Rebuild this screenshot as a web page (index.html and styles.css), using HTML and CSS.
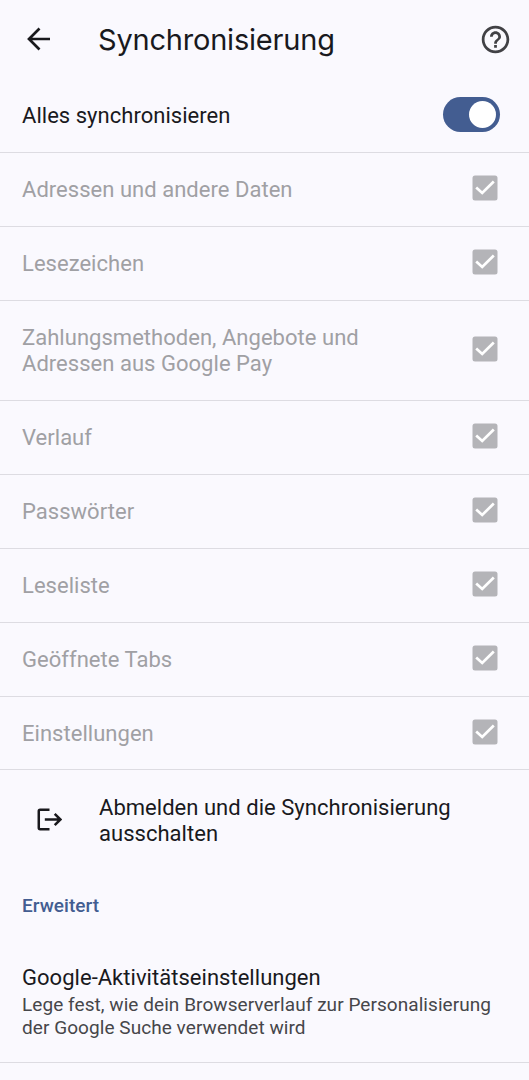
FILE: index.html
```html
<!DOCTYPE html>
<html lang="de">
<head>
<meta charset="utf-8">
<title>Synchronisierung</title>
<link rel="stylesheet" href="styles.css">
</head>
<body>
<svg class="sprite" aria-hidden="true">
  <symbol id="check" viewBox="0 0 26 26">
    <rect x=".5" y=".5" width="25" height="25" rx="2.5" fill="#b4b4b8"/>
    <path d="M4.200 12.500 10.200 18 21.800 6.500" fill="none" stroke="#fff" stroke-width="2.700"/>
  </symbol>
</svg>
<header class="topbar">
  <svg class="back" viewBox="0 0 24 24"><path d="M12.500 1.500 2 12 12.500 22.500M2.200 12H23" /></svg>
  <h1 class="title"><span>Synchronisierung</span></h1>
  <svg class="help" viewBox="0 0 24 24"><path d="M11 18h2v-2h-2v2zm1-16C6.48 2 2 6.48 2 12s4.48 10 10 10 10-4.48 10-10S17.520 2 12 2zm0 18c-4.410 0-8-3.590-8-8s3.590-8 8-8 8 3.590 8 8-3.590 8-8 8zm0-14c-2.210 0-4 1.790-4 4h2c0-1.100.9-2 2-2s2 .9 2 2c0 2-3 1.750-3 5h2c0-2.250 3-2.500 3-5 0-2.210-1.790-4-4-4z"/></svg>
</header>
<main>
  <div class="row all"><span>Alles synchronisieren</span><span class="switch"><span class="thumb"></span></span></div>
  <div class="row off"><span>Adressen und andere Daten</span><svg class="box"><use href="#check"/></svg></div>
  <div class="row off"><span>Lesezeichen</span><svg class="box"><use href="#check"/></svg></div>
  <div class="row off tall"><span>Zahlungsmethoden, Angebote und<br>Adressen aus Google Pay</span><svg class="box"><use href="#check"/></svg></div>
  <div class="row off"><span>Verlauf</span><svg class="box"><use href="#check"/></svg></div>
  <div class="row off"><span>Passwörter</span><svg class="box"><use href="#check"/></svg></div>
  <div class="row off"><span>Leseliste</span><svg class="box"><use href="#check"/></svg></div>
  <div class="row off"><span>Geöffnete Tabs</span><svg class="box"><use href="#check"/></svg></div>
  <div class="row off last"><span>Einstellungen</span><svg class="box"><use href="#check"/></svg></div>
  <div class="signout">
    <svg class="exit" viewBox="0 0 24 22"><path d="M12 1.700H3Q1.700 1.700 1.700 3V19Q1.700 20.300 3 20.300H12M7.500 11H22.500M17 5.500 22.500 11 17 16.500"/></svg>
    <span>Abmelden und die Synchronisierung<br>ausschalten</span>
  </div>
  <h2 class="section">Erweitert</h2>
  <div class="activity">
    <div>Google-Aktivitätseinstellungen</div>
    <p class="summary">Lege fest, wie dein Browserverlauf zur Personalisierung<br>der Google Suche verwendet wird</p>
  </div>
</main>
</body>
</html>
```
FILE: styles.css
```css
* { box-sizing: border-box; }
body {
  margin: 0;
  height: 1080px;
  overflow: hidden;
  background: #faf9fe;
  color: #19191d;
  font: 400 22px/26px Roboto, sans-serif;
  letter-spacing: .03px;
  white-space: nowrap;
}
.sprite { display: block; width: 0; height: 0; }
.topbar {
  display: flex;
  align-items: center;
  height: 79px;
  padding: 0 17px 1px 27px;
}
.back { width: 24px; height: 24px; fill: none; stroke: #19191d; stroke-width: 2.7; }
.title {
  flex: 1;
  margin: 1px 0 0 47px;
  font: 400 29px/40px Inter, sans-serif;
  letter-spacing: -.2px;
}
.help { width: 33px; height: 33px; fill: #414145; }
.row {
  display: flex;
  align-items: center;
  justify-content: space-between;
  height: 74px;
  padding: 0 31px 0 22px;
  border-bottom: 1px solid #dddce2;
}
.row.all { padding-right: 29px; }
.row.tall { height: 100px; }
.row.last { height: 73px; padding-top: 1px; }
.off { color: #a0a0a4; }
.box { width: 26px; height: 26px; margin-bottom: 3px; }
.switch {
  display: flex;
  justify-content: flex-end;
  align-items: center;
  width: 57px;
  height: 35px;
  margin-bottom: 2px;
  padding-right: 4px;
  border-radius: 18px;
  background: #435d91;
}
.thumb { width: 27px; height: 27px; border-radius: 50%; background: #fff; }
.signout {
  display: flex;
  align-items: center;
  height: 100px;
  padding: 1px 0 0 37px;
}
.exit { width: 25px; height: 23px; margin: 0 37px 3px 0; fill: none; stroke: #19191d; stroke-width: 2.4; }
.section {
  margin: 0;
  padding: 24px 22px 0;
  color: #435d91;
  font-weight: 500;
  font-size: 19px;
  line-height: 24px;
  letter-spacing: .03px;
}
.activity {
  height: 145px;
  padding: 47px 22px 0;
  border-bottom: 1px solid #dddce2;
}
.summary {
  margin: 2px 0 0;
  color: #46464a;
  font-size: 19px;
  line-height: 23px;
  letter-spacing: .06px;
}
```
